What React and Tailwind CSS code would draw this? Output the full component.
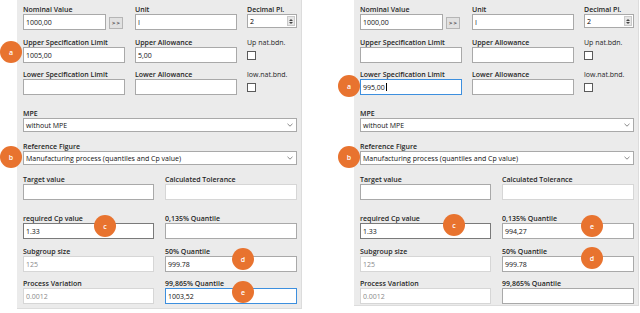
import React from 'react';

// Border styles for the small WinForms-like input boxes
const BOX_STYLES = {
  normal: 'border-[#a9a9a9] text-[#111]',
  strong: 'border-[#7a7a7a] text-[#111]',
  focus: 'border-[#3d8fde] text-[#111]',
  disabled: 'border-[#d6d6d6] text-[#8a8a8a]',
};

function Label({ children }) {
  return (
    <div className="h-[9px] text-[7px] leading-[9px] font-semibold text-[#262626] whitespace-nowrap">
      {children}
    </div>
  );
}

function Box({ value, variant = 'normal', className = '', cursor }) {
  return (
    <div
      className={`flex items-center bg-white border pl-[2px] text-[7px] leading-none ${BOX_STYLES[variant]} ${className}`}
    >
      <span>{value}</span>
      {cursor && <span className="w-px h-[8px] bg-black ml-px" />}
    </div>
  );
}

function Field({ label, className = '', boxClass = 'h-[16px]', ...rest }) {
  return (
    <div className={`flex flex-col ${className}`}>
      <Label>{label}</Label>
      <Box className={boxClass} {...rest} />
    </div>
  );
}

function Check({ label }) {
  return (
    <div className="flex flex-col w-[50px]">
      <div className="h-[9px] text-[7px] leading-[9px] text-[#262626] whitespace-nowrap">{label}</div>
      <div className="h-[16px] flex items-center">
        <div className="w-[9px] h-[9px] border border-[#5a5a5a] bg-white" />
      </div>
    </div>
  );
}

function Select({ label, value, className = '' }) {
  return (
    <div className={`flex flex-col ${className}`}>
      <Label>{label}</Label>
      <div className="h-[14px] flex items-center justify-between bg-white border border-[#a9a9a9] pl-[2px] pr-[3px] text-[7px] leading-none text-[#111]">
        <span>{value}</span>
        <svg width="6" height="4" viewBox="0 0 6 4" fill="none">
          <path d="M0.5 0.8 L3 3.2 L5.5 0.8" stroke="#6a6a6a" strokeWidth="0.8" />
        </svg>
      </div>
    </div>
  );
}

function Panel({ v, heightClass }) {
  return (
    <div className={`w-[285px] ${heightClass} bg-[#ebebeb] border-r border-b border-[#dcdcdc] pl-[6px] pt-[5px] flex flex-col`}>
      {/* row 1 */}
      <div className="flex gap-[10px]">
        <div className="flex flex-col w-[102px]">
          <Label>Nominal Value</Label>
          <div className="flex items-start gap-[3px]">
            <Box value="1000,00" className="w-[83px] h-[16px]" />
            <div className="mt-[3px] w-[14px] h-[12px] bg-[#e1e1e1] border border-[#b5b5b5] flex items-center justify-center text-[6px] font-semibold leading-none text-[#222]">
              &gt;&thinsp;&gt;
            </div>
          </div>
        </div>
        <Field label="Unit" value="I" className="w-[102px]" />
        <div className="flex flex-col w-[50px]">
          <Label>Decimal Pl.</Label>
          <div className="h-[14px] flex items-center justify-between bg-white border border-[#a9a9a9] pl-[2px] text-[7px] leading-none">
            <span>2</span>
            <div className="w-[8px] h-[10px] mr-px bg-[#e6e6e6] border border-[#c9c9c9] flex flex-col items-center justify-center gap-px">
              <div className="w-0 h-0 border-l-[2px] border-r-[2px] border-b-[2px] border-l-transparent border-r-transparent border-b-[#444]" />
              <div className="w-0 h-0 border-l-[2px] border-r-[2px] border-t-[2px] border-l-transparent border-r-transparent border-t-[#444]" />
            </div>
          </div>
        </div>
      </div>

      {/* row 2 */}
      <div className="flex gap-[10px] mt-[8px]">
        <Field label="Upper Specification Limit" value={v.usl} className="w-[102px]" />
        <Field label="Upper Allowance" value={v.ua} className="w-[102px]" />
        <Check label="Up nat.bdn." />
      </div>

      {/* row 3 */}
      <div className="flex gap-[10px] mt-[7px]">
        <Field
          label="Lower Specification Limit"
          value={v.lsl}
          variant={v.lslFocus ? 'focus' : 'normal'}
          cursor={v.lslFocus}
          className="w-[102px]"
        />
        <Field label="Lower Allowance" value="" className="w-[102px]" />
        <Check label="low.nat.bnd." />
      </div>

      <Select label="MPE" value="without MPE" className="w-[274px] mt-[14px]" />
      <Select
        label="Reference Figure"
        value="Manufacturing process (quantiles and Cp value)"
        className="w-[274px] mt-[10px]"
      />

      <div className="flex gap-[11px] mt-[10px]">
        <Field label="Target value" value="" className="w-[131px]" />
        <Field label="Calculated Tolerance" value="" variant="disabled" className="w-[132px]" />
      </div>

      <div className="flex gap-[11px] mt-[14px]">
        <Field label="required Cp value" value="1.33" variant="strong" className="w-[131px]" />
        <Field label="0,135% Quantile" value={v.q0} className="w-[132px]" />
      </div>

      <div className="flex gap-[11px] mt-[8px]">
        <Field label="Subgroup size" value="125" variant="disabled" className="w-[131px]" />
        <Field label="50% Quantile" value="999.78" className="w-[132px]" />
      </div>

      <div className="flex gap-[11px] mt-[7px]">
        <Field label="Process Variation" value="0.0012" variant="disabled" className="w-[131px]" />
        <Field
          label="99,865% Quantile"
          value={v.q2}
          variant={v.q2Focus ? 'focus' : 'normal'}
          className="w-[132px]"
        />
      </div>
    </div>
  );
}

// annotation markers laid over the two panels
const MARKERS = [
  { t: 'a', x: 11, y: 52 },
  { t: 'b', x: 11, y: 157 },
  { t: 'c', x: 105, y: 226 },
  { t: 'd', x: 243, y: 259 },
  { t: 'e', x: 243, y: 292 },
  { t: 'a', x: 349, y: 86 },
  { t: 'b', x: 349, y: 157 },
  { t: 'c', x: 454, y: 225 },
  { t: 'e', x: 592, y: 226 },
  { t: 'd', x: 592, y: 258 },
];

export default function App() {
  return (
    <div
      className="relative w-[640px] h-[313px] bg-white overflow-hidden"
      style={{ fontFamily: '"Open Sans", "Noto Sans", sans-serif' }}
    >
      <div className="flex items-start gap-[52px] pl-[17px]">
        <Panel
          heightClass="h-[309px]"
          v={{ usl: '1005,00', ua: '5,00', lsl: '', q0: '', q2: '1003,52', q2Focus: true }}
        />
        <Panel
          heightClass="h-[306px]"
          v={{ usl: '', ua: '', lsl: '995,00', lslFocus: true, q0: '994,27', q2: '' }}
        />
      </div>

      {MARKERS.map((m, i) => (
        <div
          key={i}
          className="absolute w-[22px] h-[22px] -ml-[11px] -mt-[11px] rounded-full bg-[#e8732f] flex items-center justify-center text-white text-[7px] font-semibold leading-none"
          style={{ left: m.x, top: m.y }}
        >
          {m.t}
        </div>
      ))}
    </div>
  );
}
